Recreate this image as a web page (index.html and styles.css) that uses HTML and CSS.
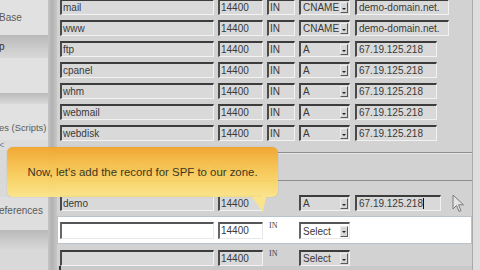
FILE: index.html
```html
<!DOCTYPE html>
<html>
<head>
<meta charset="utf-8">
<link rel="stylesheet" href="styles.css">
</head>
<body>
<div class="screen">
  <aside class="side">
    <div class="band light b1"><span class="lbl">Base</span></div>
    <div class="band dark b2"><span class="lbl sel-lbl">p</span></div>
    <div class="band light b3"></div>
    <div class="band dark b4"></div>
    <div class="band light b5"><span class="lbl small">es (Scripts)</span></div>
    <div class="band light b6"><span class="lbl arrow">&lt;</span></div>
    <div class="band light b7"></div>
    <div class="band light b8"><span class="lbl">eferences</span></div>
    <div class="band dark b9"></div>
    <div class="band light b10"></div>
  </aside>
  <div class="split"></div>
  <main class="main">
    <div class="records">
      <div class="row">
        <div class="f w-name">mail</div><div class="f w-ttl">14400</div><div class="f w-in">IN</div>
        <div class="f w-type sel"><span>CNAME</span><i class="btn"></i></div><div class="f w-addr-l">demo-domain.net.</div>
      </div>
      <div class="row">
        <div class="f w-name">www</div><div class="f w-ttl">14400</div><div class="f w-in">IN</div>
        <div class="f w-type sel"><span>CNAME</span><i class="btn"></i></div><div class="f w-addr-l">demo-domain.net.</div>
      </div>
      <div class="row">
        <div class="f w-name">ftp</div><div class="f w-ttl">14400</div><div class="f w-in">IN</div>
        <div class="f w-type sel"><span>A</span><i class="btn"></i></div><div class="f w-addr">67.19.125.218</div>
      </div>
      <div class="row">
        <div class="f w-name">cpanel</div><div class="f w-ttl">14400</div><div class="f w-in">IN</div>
        <div class="f w-type sel"><span>A</span><i class="btn"></i></div><div class="f w-addr">67.19.125.218</div>
      </div>
      <div class="row">
        <div class="f w-name">whm</div><div class="f w-ttl">14400</div><div class="f w-in">IN</div>
        <div class="f w-type sel"><span>A</span><i class="btn"></i></div><div class="f w-addr">67.19.125.218</div>
      </div>
      <div class="row">
        <div class="f w-name">webmail</div><div class="f w-ttl">14400</div><div class="f w-in">IN</div>
        <div class="f w-type sel"><span>A</span><i class="btn"></i></div><div class="f w-addr">67.19.125.218</div>
      </div>
      <div class="row">
        <div class="f w-name">webdisk</div><div class="f w-ttl">14400</div><div class="f w-in">IN</div>
        <div class="f w-type sel"><span>A</span><i class="btn"></i></div><div class="f w-addr">67.19.125.218</div>
      </div>
    </div>
    <div class="addbar"><span class="addtxt">Add New Record Before/After This Record</span></div>
    <div class="row demo">
      <div class="f w-name">demo</div><div class="f w-ttl">14400</div><div class="w-in"></div>
      <div class="f w-type sel"><span>A</span><i class="btn"></i></div><div class="f w-addr w-addr-d">67.19.125.218<i class="caret"></i></div>
    </div>
    <div class="newrow">
      <div class="row tall">
        <div class="f wf w-name"></div><div class="f wf w-ttl">14400</div><div class="w-in raw">IN</div>
        <div class="f wf w-type sel"><span>Select</span><i class="btn"></i></div>
      </div>
    </div>
    <div class="row last">
      <div class="f w-name"></div><div class="f w-ttl">14400</div><div class="w-in raw">IN</div>
      <div class="f w-type sel"><span>Select</span><i class="btn"></i></div>
    </div>
    <div class="hbar"><i class="hmark"></i></div>
  </main>
  <div class="edge"></div>

  <div class="tip">Now, let's add the record for SPF to our zone.</div>
  <svg class="pointer" width="13" height="19" viewBox="0 0 13 19">
    <path d="M1 1 L1 15 L4.5 11.5 L7 17.5 L9 16.5 L6.5 10.8 L11.5 10.8 Z" fill="#e4e4e4" stroke="#7a7a7a" stroke-width="1" stroke-linejoin="round"/>
  </svg>
</div>
</body>
</html>
```

FILE: styles.css
```css
* { box-sizing: border-box; }
html, body { margin: 0; padding: 0; }
body {
  width: 480px;
  height: 270px;
  overflow: hidden;
  background: #d2d2d2;
  font-family: "Liberation Sans", Arial, sans-serif;
}
.screen {
  position: relative;
  display: flex;
  width: 480px;
  height: 270px;
  overflow: hidden;
}

/* sidebar */
.side {
  width: 48px;
  flex: none;
  display: flex;
  flex-direction: column;
  overflow: hidden;
}
.band {
  display: flex;
  align-items: center;
  overflow: hidden;
  white-space: nowrap;
}
.light { background: #e1e1e1; }
.dark { background: linear-gradient(#b9b9b9, #cdcdcd 60%, #d8d8d8); }
.b1 { height: 35px; }
.b2 { height: 23px; }
.b3 { height: 35px; }
.b4 { height: 11px; }
.b5 { height: 36px; padding-top: 10px; }
.b6 { height: 10px; background: #dcdcdc; }
.b7 { height: 47px; background: #d9d9d9; }
.b8 { height: 33px; background: #dedede; padding-bottom: 6px; }
.b9 { height: 20px; }
.b10 { flex: 1; background: #d9d9d9; }
.lbl {
  font-size: 10px;
  color: #5a5a5a;
  margin-left: -1px;
}
.small { font-size: 9.4px; }
.sel-lbl { color: #333; }
.arrow { color: #6f7f9f; font-size: 9px; }

.split {
  width: 9px;
  flex: none;
  background: linear-gradient(to right, #c4c4c4, #b2b2b2 45%, #c6c6c6);
}

/* main */
.main {
  width: 416px;
  flex: none;
  display: flex;
  flex-direction: column;
  background: #d2d2d2;
  border-right: 1px solid #a9a9a9;
}
.edge {
  flex: 1;
  background: #dedede;
}
.records {
  margin-top: -1px;
  padding-left: 3px;
  display: flex;
  flex-direction: column;
  gap: 5px;
}
.row {
  display: flex;
  gap: 4px;
  height: 16px;
  flex: none;
}
.f {
  height: 16px;
  border-style: solid;
  border-width: 2px 1px 1px 2px;
  border-color: #3c3c3c #f2f2f2 #f2f2f2 #4a4a4a;
  background: #d9d9d9;
  color: #3a3a3a;
  font-size: 10px;
  line-height: 13px;
  padding-left: 1px;
  white-space: nowrap;
  overflow: hidden;
}
.w-name { width: 154px; }
.w-ttl { width: 45px; }
.w-in { width: 28px; }
.w-type { width: 51px; }
.w-addr { width: 82px; margin-left: 1px; padding-left: 2px; }
.w-addr-l { width: 94px; margin-left: 1px; padding-left: 2px; }
.w-addr-d { width: 86px; display: flex; align-items: center; }
.sel {
  display: flex;
  align-items: center;
  padding-left: 2px;
}
.btn {
  margin-left: auto;
  margin-right: 1px;
  width: 8px;
  height: 11px;
  border: 1px solid #5a5a5a;
  border-top-color: #eee;
  border-left-color: #eee;
  background: #d6d6d6;
  display: flex;
  align-items: center;
  justify-content: center;
}
.btn::after {
  content: "";
  border-left: 2px solid transparent;
  border-right: 2px solid transparent;
  border-top: 2px solid #222;
  margin-top: 2px;
}
.caret {
  display: inline-block;
  width: 1px;
  height: 11px;
  background: #111;
}

.addbar {
  margin-top: 11px;
  height: 29px;
  flex: none;
  border-top: 1px solid #8e8e8e;
  border-bottom: 1px solid #8e8e8e;
  box-shadow: inset 0 1px 0 #e6e6e6;
  padding: 6px 0 0 5px;
}
.addtxt {
  font-size: 9px;
  font-weight: bold;
  color: #8c8c8c;
}
.demo {
  margin-top: 14px;
  padding-left: 3px;
}
.newrow {
  margin-top: 5px;
  height: 28px;
  flex: none;
  background: #ffffff;
  border: 1px solid #b9c3cc;
  padding: 5px 0 0 2px;
}
.tall, .tall .f { height: 17px; }
.wf {
  background: #ffffff;
  border-color: #555 #e8e8e8 #e8e8e8 #666;
}
.raw {
  font-family: "Liberation Serif", "Times New Roman", serif;
  font-size: 8px;
  line-height: 8px;
  color: #444;
  padding-left: 2px;
}
.last {
  margin-top: 6px;
  padding-left: 3px;
}
.hbar {
  flex: 1;
  background: #c9c9c9;
}
.hmark {
  display: block;
  width: 2px;
  height: 4px;
  background: #333;
  margin-left: 2px;
}

/* overlays */
.tip {
  position: absolute;
  left: 7px;
  top: 147px;
  width: 271px;
  height: 50px;
  border-radius: 6px;
  background: linear-gradient(180deg, rgba(241,166,44,0.96) 0%, rgba(247,188,70,0.95) 30%, rgba(250,211,98,0.94) 65%, rgba(252,229,138,0.96) 100%);
  box-shadow: 0 0 1px rgba(150,110,30,0.5);
  color: #3b3722;
  font-size: 11.4px;
  display: flex;
  align-items: center;
  justify-content: center;
  white-space: nowrap;
}
.tip::after {
  content: "";
  position: absolute;
  left: 245px;
  top: 50px;
  width: 14px;
  height: 15px;
  background: #fbe48c;
  clip-path: polygon(0 0, 100% 0, 78% 100%);
}
.pointer {
  position: absolute;
  left: 452px;
  top: 194px;
}
```
